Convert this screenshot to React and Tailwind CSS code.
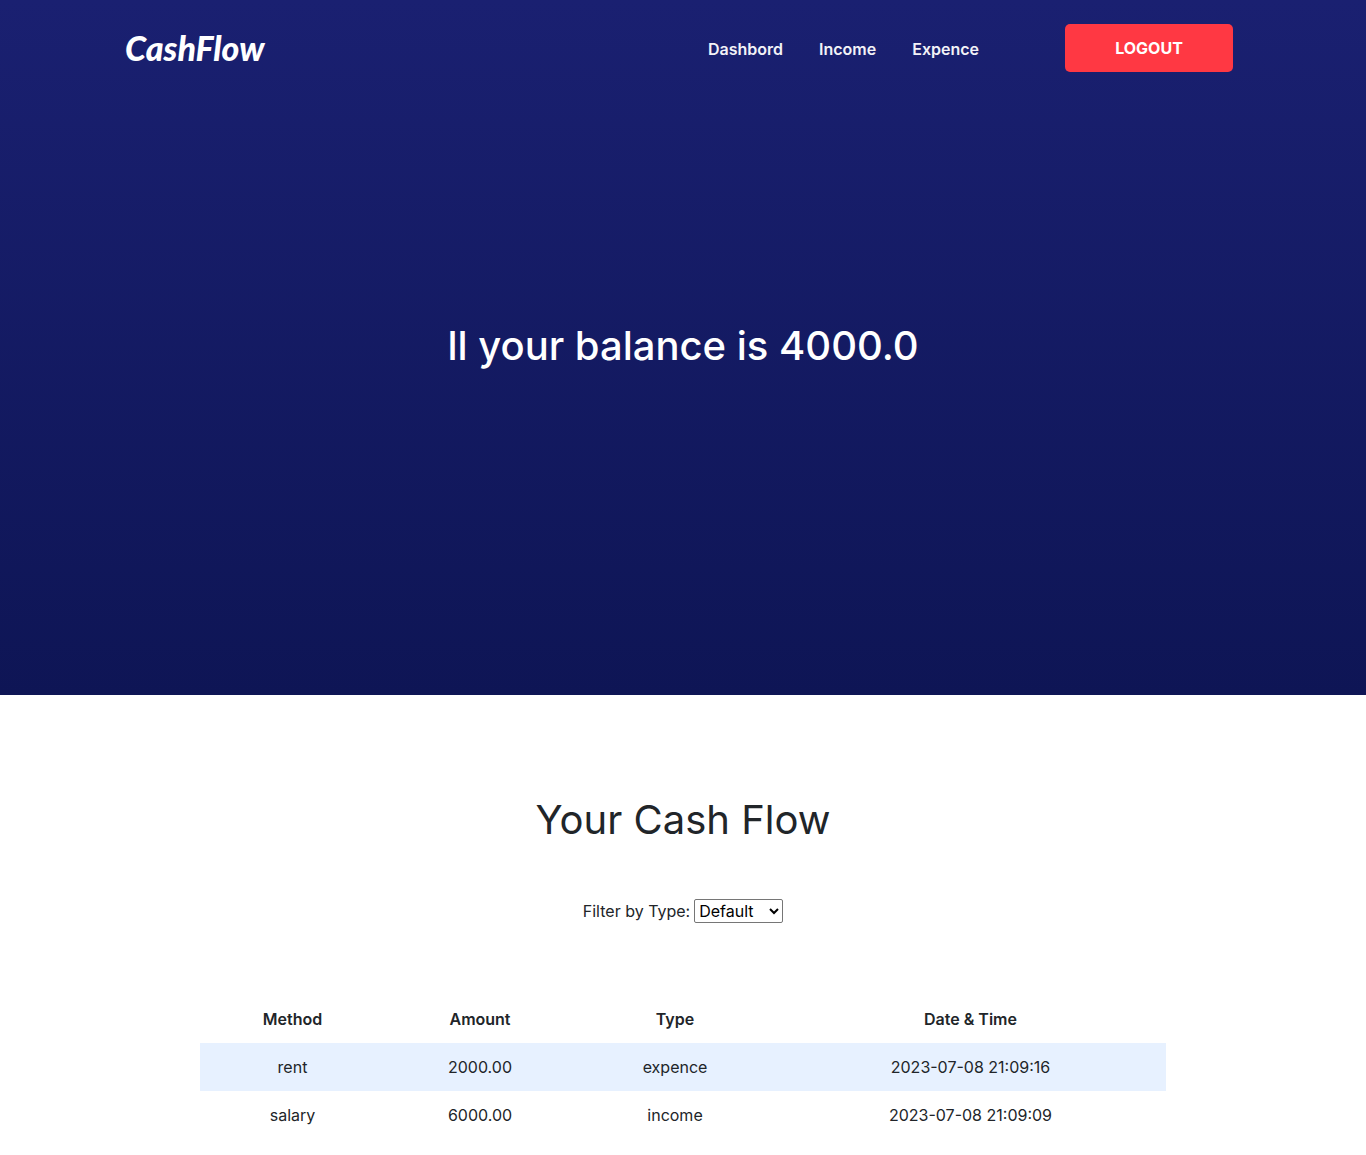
import { useState } from "react";

const links = ["Dashbord", "Income", "Expence"];

const rows = [
  { method: "rent", amount: "2000.00", type: "expence", date: "2023-07-08 21:09:16" },
  { method: "salary", amount: "6000.00", type: "income", date: "2023-07-08 21:09:09" },
];

function Header() {
  return (
    <header className="mx-auto flex h-24 w-full max-w-[1116px] items-center pr-2">
      <a href="#" className="font-['Lato',sans-serif] text-[34px] leading-10 font-black text-white italic">
        CashFlow
      </a>
      <nav className="ml-auto flex items-center gap-9 pt-0.5 text-base font-semibold text-[#f2f2f7]">
        {links.map((link) => (
          <a key={link} href="#">
            {link}
          </a>
        ))}
      </nav>
      <button type="button" className="ml-[86px] h-12 w-42 rounded-[5px] bg-[#ff3843] text-base font-bold text-white">
        LOGOUT
      </button>
    </header>
  );
}

export default function App() {
  const [filter, setFilter] = useState("default");
  const shown = filter === "default" ? rows : rows.filter((row) => row.type === filter);

  return (
    <div className="min-h-screen bg-white font-['Inter',sans-serif] text-base text-[#212529]">
      <section className="flex min-h-[695px] flex-col bg-linear-to-b from-[#1a2071] to-[#0e1555]">
        <Header />
        <div className="flex grow items-center justify-center pb-[100px]">
          <h1 className="text-[40px] leading-12 font-medium text-white">ll your balance is 4000.0</h1>
        </div>
      </section>

      <main className="mx-auto flex w-full max-w-[966px] flex-col items-center pt-[101px]">
        <h2 className="text-[40px] leading-12 font-normal">Your Cash Flow</h2>
        <div className="mt-[55px] flex items-center gap-1">
          <label htmlFor="type">Filter by Type:</label>
          <select
            id="type"
            value={filter}
            onChange={(event) => setFilter(event.target.value)}
            className="h-6 w-[89px] rounded-[2px] border border-[#767676] bg-white text-black"
          >
            <option value="default">Default</option>
            <option value="income">Income</option>
            <option value="expence">Expence</option>
          </select>
        </div>
        <table className="mt-[72px] w-full table-fixed text-center">
          <colgroup>
            <col className="w-[185px]" />
            <col className="w-[190px]" />
            <col className="w-[200px]" />
            <col />
          </colgroup>
          <thead>
            <tr className="h-12">
              <th className="font-semibold">Method</th>
              <th className="font-semibold">Amount</th>
              <th className="font-semibold">Type</th>
              <th className="font-semibold">Date &amp; Time</th>
            </tr>
          </thead>
          <tbody>
            {shown.map((row) => (
              <tr key={row.date} className="h-12 odd:bg-[#e7f1ff]">
                <td>{row.method}</td>
                <td>{row.amount}</td>
                <td>{row.type}</td>
                <td>{row.date}</td>
              </tr>
            ))}
          </tbody>
        </table>
      </main>
    </div>
  );
}
